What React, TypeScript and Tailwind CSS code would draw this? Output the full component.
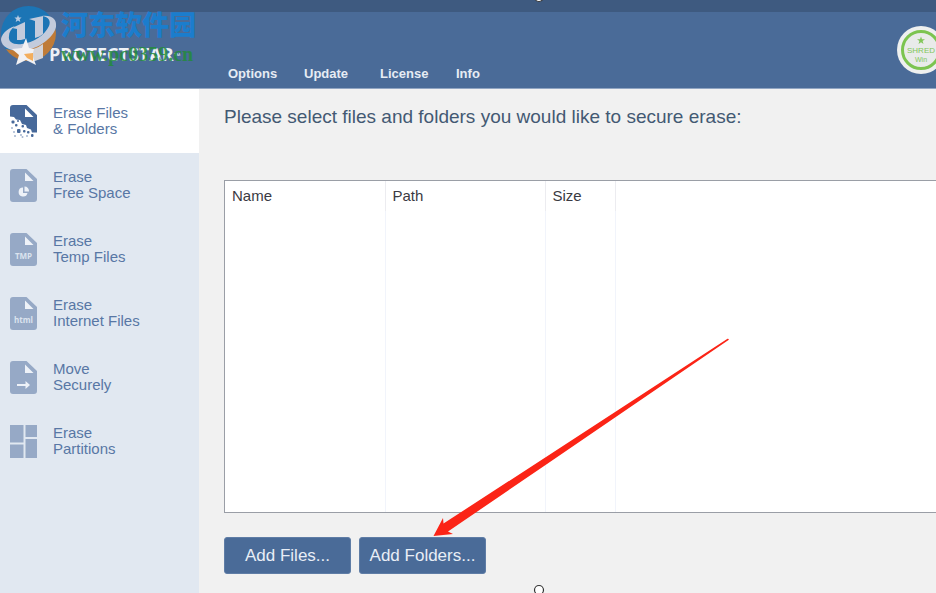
import { useState } from "react";
import type { ReactNode } from "react";

// ─── Types ───────────────────────────────────────────────────────────────────

interface SidebarEntry {
  id: string;
  lines: [string, string];
  icon: ReactNode;
}

// ─── Icons ───────────────────────────────────────────────────────────────────

function FileIcon({ children }: { children?: ReactNode }) {
  return (
    <svg viewBox="0 0 27 33" width={27} height={33} aria-hidden="true">
      <path
        d="M3 0h13.5L27 10v20a3 3 0 0 1-3 3H3a3 3 0 0 1-3-3V3a3 3 0 0 1 3-3z"
        fill="#96a9c6"
      />
      <path d="M15 3.5v8.5h8.5z" fill="#eef2f8" />
      {children}
    </svg>
  );
}

function ShredFileIcon() {
  return (
    <svg viewBox="0 0 27 33" width={27} height={33} aria-hidden="true">
      <path
        d="M3 0h13.5L27 10v17.5h-5l-1-3-4-1.5-1-3-4-1-2-4-4-.5-2-2.5-4-.5V3a3 3 0 0 1 3-3z"
        fill="#47699a"
      />
      <path d="M15 3.5v8.5h8.5z" fill="#fff" />
      <g fill="#47699a">
        <rect x="1.5" y="15.5" width="3" height="3" rx="1" />
        <rect x="5" y="19" width="2.5" height="2.5" rx="1" />
        <rect x="7" y="15" width="2" height="2" rx="1" />
        <rect x="11.5" y="20" width="2.5" height="2.5" rx="1" />
        <rect x="7" y="24" width="3.5" height="4" rx="1" />
        <rect x="13" y="25" width="2.5" height="2.5" rx="1" />
        <rect x="17" y="26" width="2.5" height="2.5" rx="1" />
        <rect x="21" y="29" width="2.5" height="3" rx="1" />
      </g>
      <g fill="#a3b4cf">
        <circle cx="2" cy="23" r="1" />
        <circle cx="4" cy="27" r="1" />
        <circle cx="5" cy="31" r="1" />
        <circle cx="11" cy="30" r="1" />
        <circle cx="17" cy="31" r="1" />
        <circle cx="12.5" cy="32" r="1" />
      </g>
    </svg>
  );
}

function IconLabel({ text }: { text: string }) {
  return (
    <text
      x="13.5"
      y="26"
      textAnchor="middle"
      fontSize="8"
      fontWeight="700"
      fontFamily="'Open Sans', sans-serif"
      fill="#dbe3ee"
    >
      {text}
    </text>
  );
}

function PartitionsIcon() {
  return (
    <svg viewBox="0 0 27 33" width={27} height={33} aria-hidden="true">
      <g fill="#96a9c6">
        <rect x="0" y="0" width="13.5" height="17.5" />
        <rect x="15.5" y="0" width="11.5" height="12" />
        <rect x="0" y="19.5" width="13.5" height="13.5" />
        <rect x="15.5" y="14" width="11.5" height="19" />
      </g>
    </svg>
  );
}

function ShredBadge() {
  return (
    <svg viewBox="0 0 48 48" width={48} height={48} role="img" aria-label="Shred Win">
      <circle cx="24" cy="24" r="24" fill="#eef0ef" />
      <circle cx="24" cy="24" r="18.5" fill="#e9ebea" stroke="#7cc450" strokeWidth="3" />
      <path
        d="M24 10.5l1 2.8h3l-2.4 1.8.9 2.9-2.5-1.7-2.5 1.7.9-2.9-2.4-1.8h3z"
        fill="#82c65a"
      />
      <g textAnchor="middle" fontFamily="'Liberation Sans', sans-serif" fill="#82c65a">
        <text x="24" y="27" fontSize="8">
          SHRED
        </text>
        <text x="24" y="36" fontSize="7">
          Win
        </text>
      </g>
    </svg>
  );
}

function SiteMark() {
  return (
    <svg viewBox="0 0 58 68" width={58} height={68} aria-hidden="true">
      <defs>
        <clipPath id="globe">
          <circle cx="28.5" cy="33.5" r="27.5" />
        </clipPath>
      </defs>
      <g clipPath="url(#globe)">
        <rect x="0" y="0" width="58" height="68" fill="#1c75b5" />
        <path d="M0 47C18 55 42 48 57 27v41H0z" fill="#bf7b38" />
      </g>
      {/* Orbit band */}
      <path
        d="M15 26C6 29 1 35 1 40c1 8 12 13 26 10 15-3 27-14 29-23 1-8-4-12-14-11 7 1 9 5 7 10-4 9-16 17-27 18-9 1-14-2-13-8 0-4 2-7 6-10z"
        fill="#c3cbdc"
      />
      {/* Twin columns */}
      <path d="M12 28l13-6v17c-3 1-5 1-8 1V29z" fill="#c3cbdc" />
      <path d="M29 19l14-3v18c-2 2-5 3-8 4V21z" fill="#c3cbdc" />
      <path d="M33 49c4-1 7-3 10-5v14l-8 3h-2z" fill="#d3d3d8" />
      <path
        d="M18 15l1 2.5 2.6.1-2 1.7.7 2.6-2.3-1.5-2.3 1.5.7-2.6-2-1.7 2.6-.1z"
        fill="#b8cbe2"
      />
      {/* Star */}
      <path
        d="M26 38l3 10 5 1-1 4-4 4h4l3 8-10-5-10 5 3-10-7-6 10-1z"
        fill="#f1f1f3"
      />
      <path d="M24 54l9-1v8l-6-3z" fill="#f3ae5d" />
    </svg>
  );
}

// ─── Data ────────────────────────────────────────────────────────────────────

const menuItems = ["Options", "Update", "License", "Info"];

const sidebarEntries: SidebarEntry[] = [
  { id: "files", lines: ["Erase Files", "& Folders"], icon: <ShredFileIcon /> },
  {
    id: "free-space",
    lines: ["Erase", "Free Space"],
    icon: (
      <FileIcon>
        <path d="M13 18.5a4.5 4.500 0 1 0 4.500 5.500H13z" fill="#eef2f8" />
        <path d="M14.5 17.5v5h4.500a4.5 4.500 0 0 0-4.500-5z" fill="#eef2f8" />
      </FileIcon>
    ),
  },
  {
    id: "temp",
    lines: ["Erase", "Temp Files"],
    icon: (
      <FileIcon>
        <IconLabel text="TMP" />
      </FileIcon>
    ),
  },
  {
    id: "internet",
    lines: ["Erase", "Internet Files"],
    icon: (
      <FileIcon>
        <IconLabel text="html" />
      </FileIcon>
    ),
  },
  {
    id: "move",
    lines: ["Move", "Securely"],
    icon: (
      <FileIcon>
        <path d="M7 23h8.500v-3l4.500 4-4.500 4v-3H7z" fill="#eef2f8" />
      </FileIcon>
    ),
  },
  { id: "partitions", lines: ["Erase", "Partitions"], icon: <PartitionsIcon /> },
];

// ─── Sections ────────────────────────────────────────────────────────────────

function Header() {
  return (
    <header className="relative flex h-[89px] shrink-0 overflow-hidden border-b border-[#91a5c2] border-t-12 border-t-[#3e5a80] bg-[#4a6b98]">
      <div className="w-[224px] shrink-0 pt-[30px] pl-[49px] text-[18px] leading-6 font-bold text-[#edf1f6]">
        <span className="font-['Open_Sans',sans-serif]">PROTECTSTAR</span>
        <sup className="text-[7px] font-normal">™</sup>
      </div>

      <nav className="flex items-end pb-1 pl-1">
        {menuItems.map((item) => (
          <button
            key={item}
            type="button"
            className="w-[76px] text-left text-[13px] leading-5 font-bold text-[#e6ecf4]"
          >
            {item}
          </button>
        ))}
      </nav>

      <div className="-mr-[9px] ml-auto shrink-0 pt-[14px]">
        <ShredBadge />
      </div>
    </header>
  );
}

/** Site stamp laid over the top-left corner of the window. */
function SiteStamp() {
  return (
    <div className="pointer-events-none absolute top-0 left-0 flex">
      <SiteMark />
      <div className="pt-1 pl-[3px] whitespace-nowrap">
        <p className="font-['Noto_Sans_CJK_SC',sans-serif] text-[27px] leading-10 font-black text-[#1b7dcd]">
          河东软件园
        </p>
        <p className="font-['Liberation_Serif',serif] text-[20px] leading-5 font-bold text-[#238a3c]/85">
          www.pc0359.cn
        </p>
      </div>
    </div>
  );
}

function Sidebar({
  active,
  onSelect,
}: {
  active: string;
  onSelect: (id: string) => void;
}) {
  return (
    <nav className="w-[199px] shrink-0 bg-[#e1e8f1]">
      {sidebarEntries.map((entry) => (
        <button
          key={entry.id}
          type="button"
          onClick={() => onSelect(entry.id)}
          className={[
            "flex h-16 w-full items-center gap-4 pl-[10px] text-left text-[15px] leading-4 text-[#5877a5]",
            active === entry.id ? "bg-white" : "",
          ].join(" ")}
        >
          {entry.icon}
          <span>
            {entry.lines[0]}
            <br />
            {entry.lines[1]}
          </span>
        </button>
      ))}
    </nav>
  );
}

function FileTable() {
  return (
    <div className="grid flex-1 border border-r-0 border-[#9a9ea6] bg-white">
      <table className="h-full w-full table-fixed border-collapse text-left text-[15px] text-[#3a3a42]">
        <thead>
          <tr className="h-[30px]">
            <th className="w-[160px] border-r border-[#ececf0] pl-[7px] font-normal">Name</th>
            <th className="w-[160px] border-r border-[#ececf0] pl-[7px] font-normal">Path</th>
            <th className="w-[70px] border-r border-[#ececf0] pl-[7px] font-normal">Size</th>
            <td />
          </tr>
        </thead>
        <tbody>
          <tr>
            <td className="border-r border-[#f1f4fb]" />
            <td className="border-r border-[#f1f4fb]" />
            <td className="border-r border-[#f1f4fb]" />
            <td />
          </tr>
        </tbody>
      </table>
    </div>
  );
}

function ActionButton({ label }: { label: string }) {
  return (
    <button
      type="button"
      className="h-[37px] w-[127px] rounded-[3px] border border-[#5f7da6] bg-[#4a6b98] text-[17px] text-[#e8eef6]"
    >
      {label}
    </button>
  );
}

/** Red pointer and selection handles drawn on top of the window. */
function Annotations() {
  return (
    <svg
      viewBox="0 0 936 593"
      width={936}
      height={593}
      className="pointer-events-none absolute top-0 left-0"
      aria-hidden="true"
    >
      <path
        d="M433.500 536L443 518L443.500 523.500L546 457L727.500 338.700Q729.500 338.500 728.500 340L547 464L448 531.500L453 534z"
        fill="#fb2416"
      />
      <g fill="#fff" stroke="#333" strokeWidth="1.2">
        <circle cx="539" cy="-3" r="4.5" />
        <circle cx="539" cy="590" r="4.5" />
      </g>
    </svg>
  );
}

// ─── Main Component ──────────────────────────────────────────────────────────

export default function App() {
  const [active, setActive] = useState("files");

  return (
    <div className="relative flex h-screen flex-col overflow-hidden bg-[#f1f1f1] font-['Liberation_Sans',Arial,sans-serif]">
      <Header />
      <div className="flex flex-1">
        <Sidebar active={active} onSelect={setActive} />
        <main className="flex min-w-0 flex-1 flex-col pt-4 pb-[19px] pl-[25px]">
          <h1 className="mb-[51px] text-[19px] leading-6 text-[#435973]">
            Please select files and folders you would like to secure erase:
          </h1>
          <FileTable />
          <div className="mt-6 flex gap-2">
            <ActionButton label="Add Files..." />
            <ActionButton label="Add Folders..." />
          </div>
        </main>
      </div>
      <SiteStamp />
      <Annotations />
    </div>
  );
}
